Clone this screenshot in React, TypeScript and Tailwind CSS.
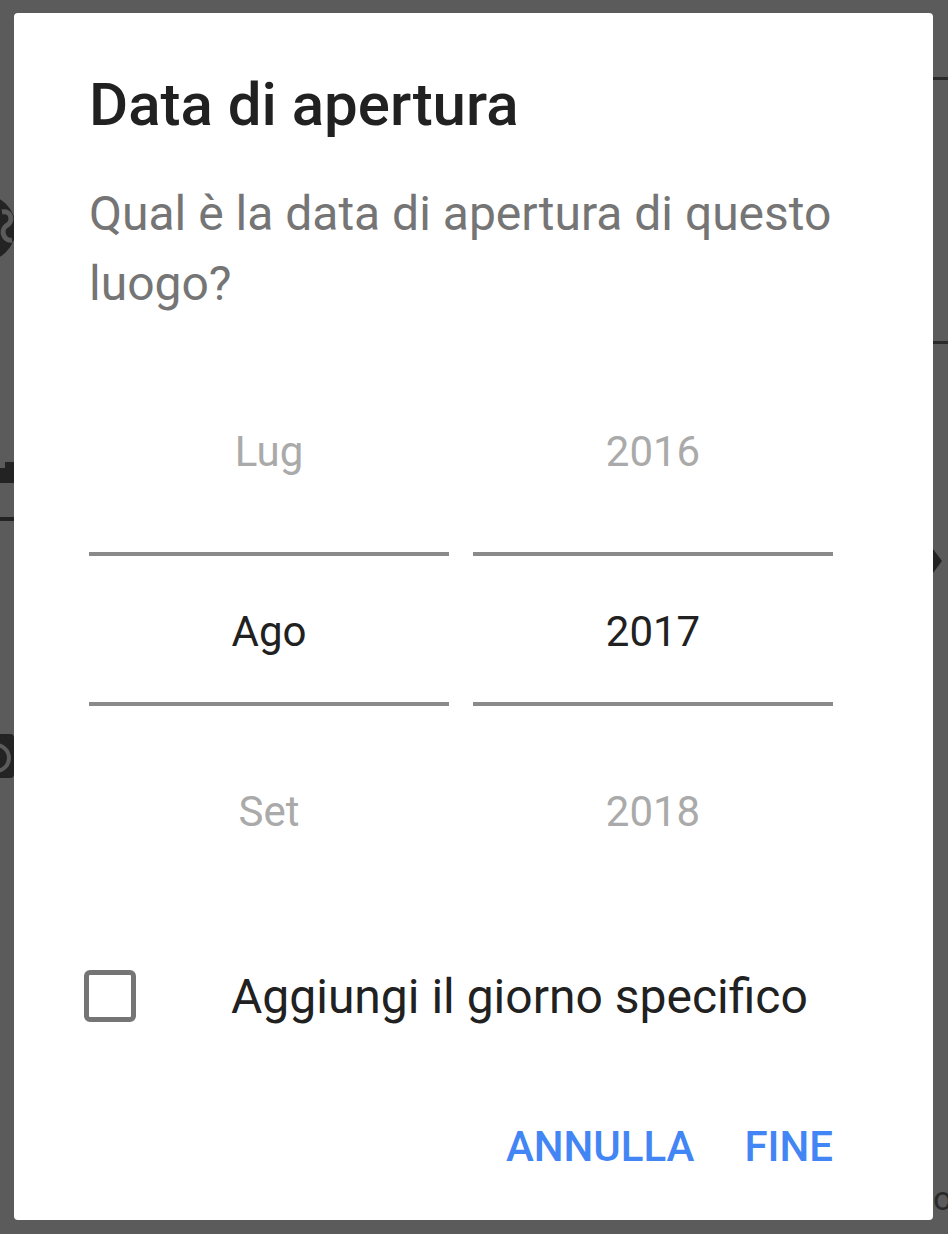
export default function App() {
  return (
    <div className="relative min-h-[1234px] w-[948px] overflow-hidden bg-[#5b5b5b] font-['Roboto',sans-serif]">
      {/* bits of the page peeking out behind the overlay */}
      <svg className="absolute left-0 top-[190px]" width="14" height="76" viewBox="0 0 14 76">
        <circle cx="-18" cy="38" r="34" fill="#232323" />
        <path d="M2 22 C12 20 14 32 6 36 C0 40 4 52 12 50" stroke="#5b5b5b" strokeWidth="5" fill="none" />
      </svg>
      <div className="absolute left-0 top-[462px] h-[21px] w-[14px] bg-[#232323]" />
      <div className="absolute left-0 top-[462px] h-[6px] w-[5px] bg-[#5b5b5b]" />
      <div className="absolute left-0 top-[517px] h-[4px] w-[14px] bg-[#232323]" />
      <svg className="absolute left-0 top-[728px]" width="14" height="56" viewBox="0 0 14 56">
        <rect x="-30" y="6" width="44" height="44" rx="4" fill="#232323" />
        <circle cx="-4" cy="30" r="13" stroke="#5b5b5b" strokeWidth="4" fill="none" />
      </svg>
      <div className="absolute right-0 top-[77px] h-[3px] w-[15px] bg-[#2a2a2a]" />
      <div className="absolute right-0 top-[341px] h-[3px] w-[15px] bg-[#2a2a2a]" />
      <svg className="absolute left-[933px] top-[549px]" width="12" height="24" viewBox="0 0 12 24">
        <path d="M0 0 L9 12 L0 24 Z" fill="#232323" />
      </svg>
      <span className="absolute left-[933px] top-[1178px] text-[34px] leading-[40px] text-[#2a2a2a]">o</span>

      <div className="relative ml-[14px] pt-[13px]">
        <div className="w-[919px] rounded-[4px] bg-white pb-[52px] pl-[75px] pr-[100px] pt-[56px]">
          <h1 className="text-[60px] font-medium leading-[72px] text-[#212121]">Data di apertura</h1>
          <p className="mt-[38px] text-[48px] leading-[70px] text-[#757575]">
            Qual è la data di apertura di questo
            <br />
            luogo?
          </p>

          <div className="mt-[33px] grid grid-cols-2 gap-x-[24px]">
            <PickerColumn prev="Lug" current="Ago" next="Set" />
            <PickerColumn prev="2016" current="2017" next="2018" />
          </div>

          <div className="mt-[51px] -ml-[5px] flex h-[53px] items-center">
            <div className="h-[52px] w-[52px] rounded-[6px] border-[5px] border-[#757575]" />
            <span className="ml-[95px] pt-[3px] text-[48px] leading-[50px] text-[#212121]">Aggiungi il giorno specifico</span>
          </div>

          <div className="mt-[104px] flex justify-end gap-[50px] text-[42px] font-medium leading-[42px] text-[#4285f4]">
            <button>ANNULLA</button>
            <button>FINE</button>
          </div>
        </div>
      </div>
    </div>
  );
}

function PickerColumn({ prev, current, next }: { prev: string; current: string; next: string }) {
  return (
    <div className="flex flex-col text-[42px] leading-[42px]">
      <div className="flex h-[200px] items-center justify-center text-[#aaaaaa]">{prev}</div>
      <div className="h-[4px] bg-[#8a8a8a]" />
      <div className="flex h-[146px] items-center justify-center pt-[6px] text-[#212121]">{current}</div>
      <div className="h-[4px] bg-[#8a8a8a]" />
      <div className="flex h-[212px] items-center justify-center text-[#aaaaaa]">{next}</div>
    </div>
  );
}
